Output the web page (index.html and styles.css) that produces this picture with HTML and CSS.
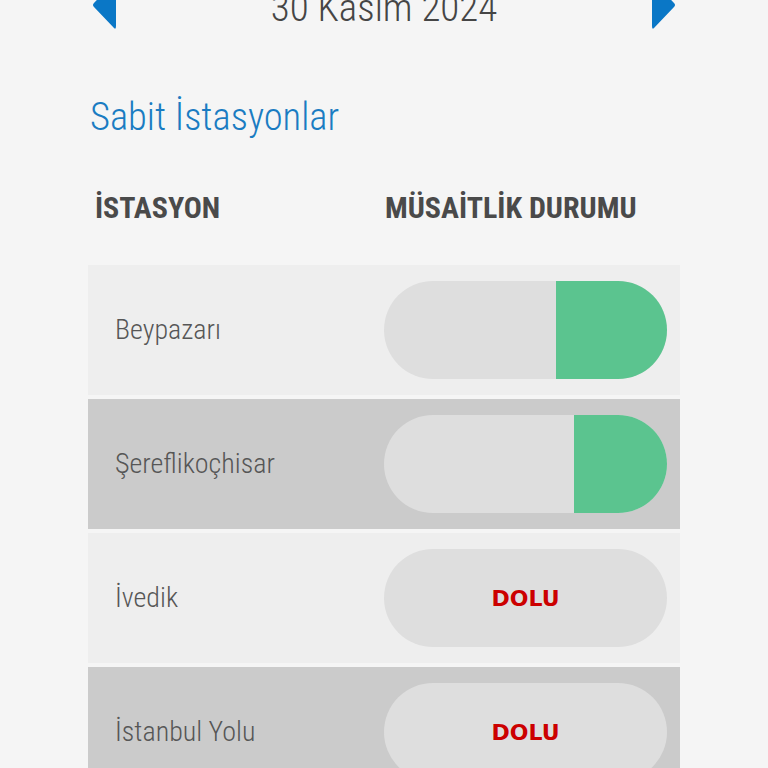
FILE: index.html
```html
<!DOCTYPE html>
<html lang="tr">
<head>
<meta charset="utf-8">
<link rel="stylesheet" href="styles.css">
</head>
<body>
<div class="page">
  <div class="datebar">
    <svg class="arrow" width="26" height="50" viewBox="0 0 26 50"><path d="M23 2 Q25 0 25 4 L25 46 Q25 50 23 48 L3 27 Q1 25 3 23 Z" fill="#0a77c6"/></svg>
    <div class="date">30 Kasım 2024</div>
    <svg class="arrow" width="26" height="50" viewBox="0 0 26 50"><path d="M3 2 Q1 0 1 4 L1 46 Q1 50 3 48 L23 27 Q25 25 23 23 Z" fill="#0a77c6"/></svg>
  </div>
  <h1 class="title">Sabit İstasyonlar</h1>
  <div class="thead">
    <div class="th th-station">İSTASYON</div>
    <div class="th">MÜSAİTLİK DURUMU</div>
  </div>
  <div class="rows">
    <div class="row light">
      <div class="name">Beypazarı</div>
      <div class="pill"><div class="fill" style="width:111px"></div></div>
    </div>
    <div class="row dark">
      <div class="name">Şereflikoçhisar</div>
      <div class="pill"><div class="fill" style="width:93px"></div></div>
    </div>
    <div class="row light">
      <div class="name">İvedik</div>
      <div class="pill"><span class="full">DOLU</span></div>
    </div>
    <div class="row dark">
      <div class="name">İstanbul Yolu</div>
      <div class="pill"><span class="full">DOLU</span></div>
    </div>
  </div>
</div>
</body>
</html>
```

FILE: styles.css
```css
html, body {
  margin: 0;
  padding: 0;
  background: #f5f5f5;
}
body {
  font-family: "Roboto", "Liberation Sans", sans-serif;
  font-stretch: 75%;
  overflow: hidden;
  height: 768px;
}
.page {
  padding: 0 88px;
}
.datebar {
  display: flex;
  align-items: flex-start;
  justify-content: space-between;
  margin-top: -20px;
  height: 56px;
  padding: 0 3px;
}
.arrow {
  display: block;
}
.date {
  font-size: 39px;
  font-weight: 300;
  color: #454545;
  line-height: 56px;
}
.title {
  margin: 59px 0 0 2px;
  font-size: 38.5px;
  font-weight: 300;
  color: #1a7cc2;
  line-height: 44px;
}
.thead {
  display: grid;
  grid-template-columns: 297px 1fr;
  margin-top: 52px;
}
.th {
  font-size: 30px;
  font-weight: 700;
  color: #4a4a4a;
  line-height: 34px;
}
.th-station {
  padding-left: 7px;
}
.rows {
  display: flex;
  flex-direction: column;
  gap: 4px;
  margin-top: 40px;
}
.row {
  display: grid;
  grid-template-columns: 296px 283px;
  align-items: center;
  height: 130px;
}
.row.light { background: #eeeeee; }
.row.dark { background: #cbcbcb; }
.name {
  padding-left: 27px;
  font-size: 28px;
  font-weight: 300;
  line-height: 30px;
  color: #565656;
}
.pill {
  height: 98px;
  border-radius: 49px;
  background: #dedede;
  display: flex;
  justify-content: flex-end;
  align-items: center;
  overflow: hidden;
  position: relative;
}
.fill {
  height: 100%;
  background: #5bc48f;
}
.full {
  position: absolute;
  left: 0;
  right: 0;
  text-align: center;
  font-family: "DejaVu Sans", "Liberation Sans", sans-serif;
  font-stretch: normal;
  font-weight: 700;
  font-size: 22px;
  color: #cc0000;
}
```
